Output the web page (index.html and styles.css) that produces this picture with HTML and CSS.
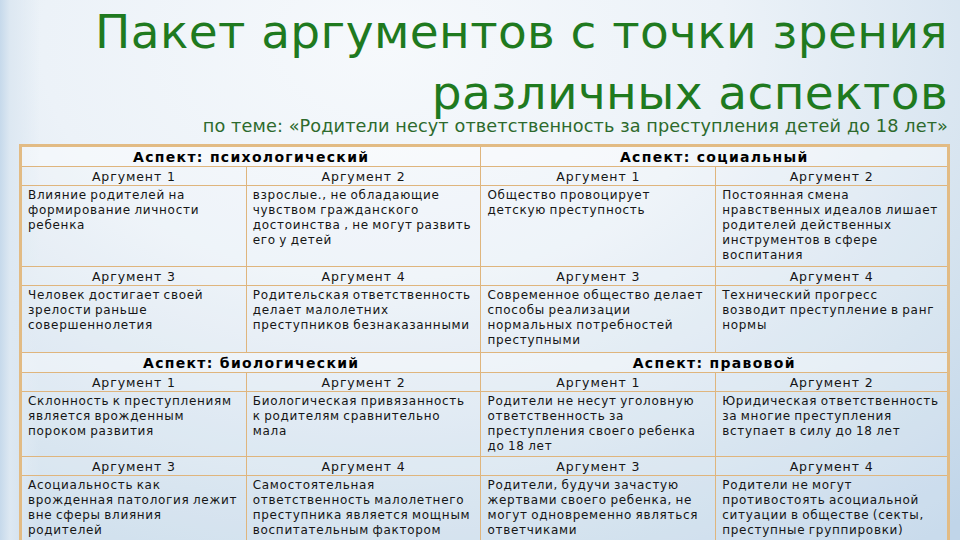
FILE: index.html
```html
<!DOCTYPE html>
<html lang="ru">
<head>
<meta charset="utf-8">
<title>Пакет аргументов</title>
<link rel="stylesheet" href="styles.css">
</head>
<body>
<div class="slide">
  <header class="heading">
    <h1 class="title"><span class="title-line first">Пакет аргументов с точки зрения</span><span class="title-line second">различных аспектов</span></h1>
    <p class="subtitle">по теме: «Родители несут ответственность за преступления детей до 18 лет»</p>
  </header>
  <table class="grid">
    <colgroup>
      <col class="c1"><col class="c2"><col class="c3"><col class="c4">
    </colgroup>
    <tbody>
      <tr class="aspect"><th colspan="2">Аспект: психологический</th><th colspan="2">Аспект: социальный</th></tr>
      <tr class="arg"><td>Аргумент 1</td><td>Аргумент 2</td><td>Аргумент 1</td><td>Аргумент 2</td></tr>
      <tr class="text r1">
        <td>Влияние родителей на формирование личности ребенка</td>
        <td>взрослые., не обладающие чувством гражданского достоинства , не могут развить его у детей</td>
        <td>Общество провоцирует детскую преступность</td>
        <td>Постоянная смена нравственных идеалов лишает родителей действенных инструментов в сфере воспитания</td>
      </tr>
      <tr class="arg"><td>Аргумент 3</td><td>Аргумент 4</td><td>Аргумент 3</td><td>Аргумент 4</td></tr>
      <tr class="text r2">
        <td>Человек достигает своей зрелости раньше совершеннолетия</td>
        <td>Родительская ответственность делает малолетних преступников безнаказанными</td>
        <td>Современное общество делает способы реализации нормальных потребностей преступными</td>
        <td>Технический прогресс возводит преступление в ранг нормы</td>
      </tr>
      <tr class="aspect"><th colspan="2">Аспект: биологический</th><th colspan="2">Аспект: правовой</th></tr>
      <tr class="arg"><td>Аргумент 1</td><td>Аргумент 2</td><td>Аргумент 1</td><td>Аргумент 2</td></tr>
      <tr class="text r3">
        <td>Склонность к преступлениям является врожденным пороком развития</td>
        <td>Биологическая привязанность к родителям сравнительно мала</td>
        <td>Родители не несут уголовную ответственность за преступления своего ребенка до 18 лет</td>
        <td>Юридическая ответственность за многие преступления вступает в силу до 18 лет</td>
      </tr>
      <tr class="arg"><td>Аргумент 3</td><td>Аргумент 4</td><td>Аргумент 3</td><td>Аргумент 4</td></tr>
      <tr class="text r4">
        <td>Асоциальность как врожденная патология лежит вне сферы влияния родителей</td>
        <td>Самостоятельная ответственность малолетнего преступника является мощным воспитательным фактором</td>
        <td>Родители, будучи зачастую жертвами своего ребенка, не могут одновременно являться ответчиками</td>
        <td>Родители не могут противостоять асоциальной ситуации в обществе (секты, преступные группировки)</td>
      </tr>
    </tbody>
  </table>
</div>
</body>
</html>
```

FILE: styles.css
```css
html, body {
  margin: 0;
  padding: 0;
  width: 960px;
  height: 540px;
  overflow: hidden;
}

body {
  font-family: "DejaVu Sans", "Noto Sans", sans-serif;
  background:
    linear-gradient(90deg, #c6d9eb 0px, #dde8f2 10px, rgba(240, 245, 250, 0) 40px),
    radial-gradient(ellipse 900px 620px at 40% 8%, #f6f9fc 0%, #ecf2f8 38%, #d2e1ee 75%, #c0d5e9 100%);
}

.slide {
  width: 960px;
  height: 540px;
  display: flex;
  flex-direction: column;
}

.heading {
  padding: 0 12px 0 0;
  text-align: right;
}

.title {
  margin: 0;
  font-weight: normal;
  font-size: 47px;
  color: #1f7a1f;
  letter-spacing: 0.4px;
}

.title-line {
  display: block;
}

.title-line.first {
  line-height: 63px;
}

.title-line.second {
  margin-top: 4px;
  line-height: 51px;
}

.subtitle {
  margin: 1px 0 0 0;
  font-size: 17.7px;
  line-height: 14px;
  color: #2d6a2d;
  letter-spacing: 0.1px;
}

.grid {
  margin: 11px 0 0 19px;
  width: 931px;
  table-layout: fixed;
  border-collapse: collapse;
  border: 3px solid #e2bb84;
}

.c1 { width: 225px; }
.c2 { width: 234px; }
.c3 { width: 234px; }
.c4 { width: 232px; }

.grid th,
.grid td {
  border: 1.5px solid #dfb57d;
  padding: 0;
  color: #151515;
}

.aspect th {
  height: 19px;
  font-size: 14px;
  font-weight: bold;
  text-align: center;
  background: rgba(255, 255, 255, 0.45);
  letter-spacing: 1.3px;
  color: #000;
}

.arg td {
  height: 18px;
  font-size: 12.5px;
  text-align: center;
  background: rgba(255, 255, 255, 0.22);
  letter-spacing: 0.9px;
}

.text td {
  vertical-align: top;
  font-size: 12px;
  line-height: 15px;
  padding: 2px 8px 0 6px;
  background: rgba(255, 255, 255, 0.15);
  letter-spacing: 0.7px;
  word-spacing: -1px;
}

.text td:nth-child(4) {
  padding-right: 3px;
}

.r1 td { height: 78px; }
.r2 td { height: 64px; }
.r3 td { height: 62px; }
.r4 td { height: 70px; }
```
